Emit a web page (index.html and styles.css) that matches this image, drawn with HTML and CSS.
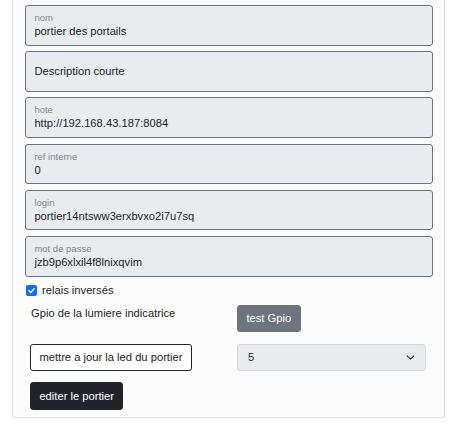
FILE: index.html
```html
<!DOCTYPE html>
<html lang="fr">
<head>
<meta charset="utf-8">
<title>editer le portier</title>
<link rel="stylesheet" href="styles.css">
</head>
<body>
<div class="page">
  <div class="card">
    <div class="field"><span class="flabel">nom</span><span class="fvalue">portier des portails</span></div>
    <div class="field plain"><span class="fvalue">Description courte</span></div>
    <div class="field"><span class="flabel">hote</span><span class="fvalue">http://192.168.43.187:8084</span></div>
    <div class="field"><span class="flabel">ref interne</span><span class="fvalue">0</span></div>
    <div class="field"><span class="flabel">login</span><span class="fvalue">portier14ntsww3erxbvxo2i7u7sq</span></div>
    <div class="field"><span class="flabel">mot de passe</span><span class="fvalue">jzb9p6xlxil4f8lnixqvim</span></div>
    <label class="check">
      <span class="box"><svg viewBox="0 0 12 12" width="9" height="9"><path d="M2.5 6.2 L5 8.6 L9.6 3.6" fill="none" stroke="#fff" stroke-width="1.8" stroke-linecap="round" stroke-linejoin="round"/></svg></span>
      <span>relais inversés</span>
    </label>
    <div class="grid">
      <div class="gtext">Gpio de la lumiere indicatrice</div>
      <div><button class="btn btn-gray">test Gpio</button></div>
      <div><button class="btn btn-outline">mettre a jour la led du portier</button></div>
      <div class="select"><span>5</span><svg viewBox="0 0 16 16" width="9" height="9"><path d="M2 5 L8 11 L14 5" fill="none" stroke="#343a40" stroke-width="2" stroke-linecap="round" stroke-linejoin="round"/></svg></div>
      <div><button class="btn btn-dark">editer le portier</button></div>
    </div>
  </div>
</div>
</body>
</html>
```

FILE: styles.css
```css
html, body {
  margin: 0;
  padding: 0;
  background: #fff;
}
body {
  font-family: "Liberation Sans", Arial, sans-serif;
  font-size: 11.2px;
  color: #212529;
  line-height: 1.5;
}
.page {
  padding: 0 10px 0 12px;
}
.card {
  background: #fcfcfc;
  border: 1px solid #dee2e6;
  border-top: none;
  border-radius: 0 0 3px 3px;
  padding: 5px 11px 8px 12px;
  box-sizing: border-box;
  height: 418px;
}
.field {
  height: 40.6px;
  box-sizing: border-box;
  background: #e9ecef;
  border: 1px solid #6c757d;
  border-radius: 3px;
  margin-bottom: 5.6px;
  padding: 6px 8.4px 0 8.4px;
  display: flex;
  flex-direction: column;
}
.flabel {
  font-size: 9.5px;
  line-height: 12px;
  color: #83878b;
  height: 12px;
}
.fvalue {
  font-size: 11.2px;
  line-height: 15px;
  margin-top: 0;
}
.field.plain {
  justify-content: center;
  padding-top: 0;
}
.check {
  display: flex;
  align-items: center;
  gap: 5px;
  height: 16.8px;
  padding-left: 1px;
}
.box {
  width: 11px;
  height: 11px;
  background: #0d6efd;
  border-radius: 2px;
  display: flex;
  align-items: center;
  justify-content: center;
}
.grid {
  display: grid;
  grid-template-columns: 207px 189px;
  row-gap: 11.6px;
  padding-left: 5px;
  margin-top: 6px;
}
.gtext {
  padding-left: 1px;
  line-height: 16.8px;
}
.btn {
  font-family: "Liberation Sans", Arial, sans-serif;
  font-size: 11.2px;
  line-height: 16.8px;
  padding: 4.2px 8.4px;
  border-radius: 3px;
  border: 1px solid transparent;
  margin: 0;
  display: block;
}
.btn-gray {
  background: #6c757d;
  color: #fff;
  border-color: #6c757d;
}
.btn-outline {
  background: #fff;
  color: #212529;
  border-color: #212529;
}
.btn-dark {
  background: #212529;
  color: #fff;
  border-color: #212529;
}
.select {
  height: 27.2px;
  box-sizing: border-box;
  background: #e9ecef;
  border: 1px solid #d3d8dd;
  border-radius: 3px;
  display: flex;
  align-items: center;
  justify-content: space-between;
  padding: 0 10px 0 10px;
}
```
